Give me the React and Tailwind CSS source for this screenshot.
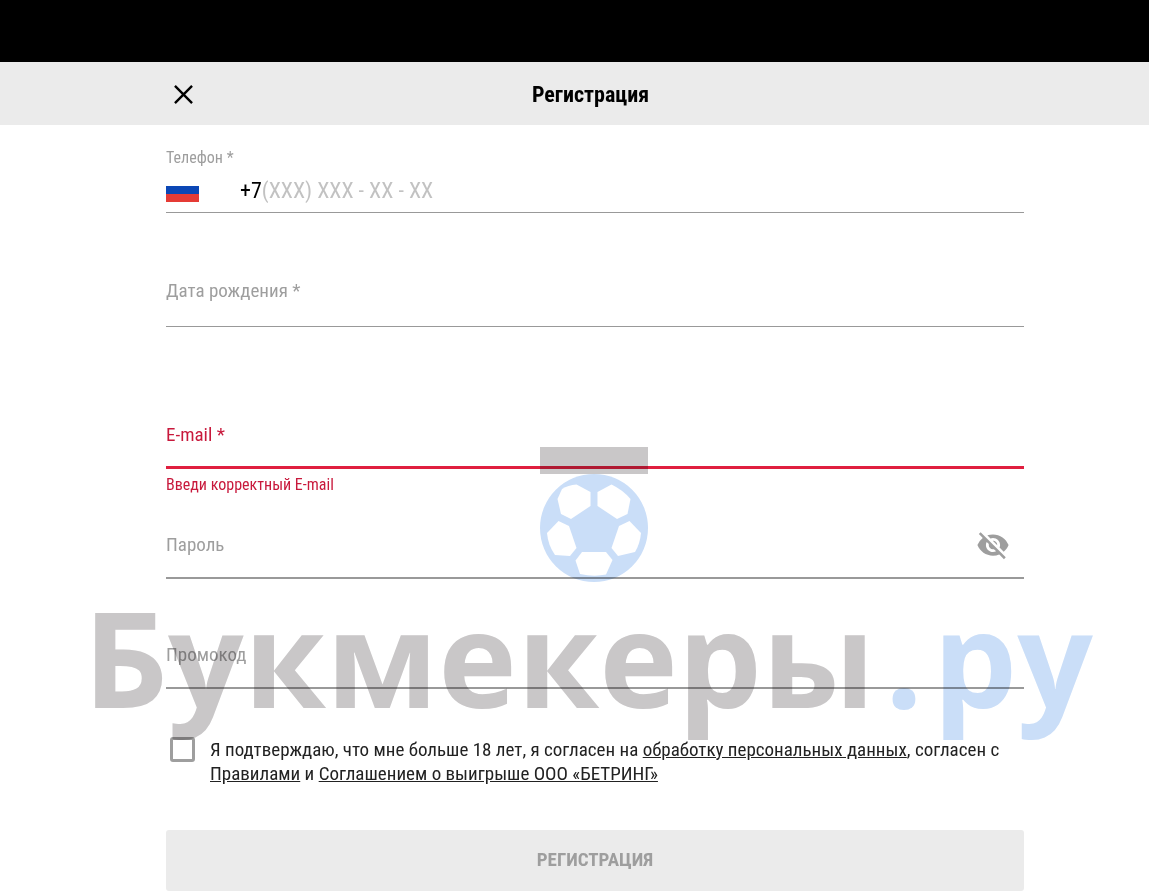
import { useState } from 'react';
import { MdVisibility, MdVisibilityOff } from 'react-icons/md';

function Watermark() {
  return (
    <div className="pointer-events-none absolute inset-x-0 top-[447px] flex flex-col items-center overflow-x-clip pl-[39px] mix-blend-multiply" aria-hidden>
      <svg className="h-[136px] w-[108px]" viewBox="0 0 108 136">
        <rect width="108" height="27" fill="#c9c7c8" />
        <circle cx="54" cy="81" r="54" fill="#cadef8" />
        <g fill="#fff">
          <path d="M17.500 52L22 42Q28 38 36.500 37.500L50.500 45V59L31 72L21 67Z" />
          <path d="M57.500 45L71.500 37.500Q83 43 90.500 52L87.500 67L77 72L57.500 59Z" />
          <path d="M7 86L18.500 74L29 79L36.500 101L30 109L15 108Q8 98 7 86Z" />
          <path d="M71.500 101L79 79L89.500 74L101 86Q100 97 95 105L78 109Z" />
          <path d="M42 105H66L72.500 113L66 127.500Q54 130 40 127L35.500 113.500Z" />
        </g>
      </svg>
      <div className="flex gap-[10px] whitespace-nowrap pr-3 font-['Open_Sans',sans-serif] text-[133px] font-bold leading-[148px]">
        <span className="text-[#c9c7c8]">Букмекеры</span>
        <span className="text-[#cadef8]">.</span>
        <span className="text-[#cadef8]">ру</span>
      </div>
    </div>
  );
}

function Flag() {
  return (
    <svg className="h-6 w-[33px]" viewBox="0 0 33 24">
      <rect width="33" height="8" fill="#fff" />
      <rect y="8" width="33" height="8" fill="#0b47b5" />
      <rect y="16" width="33" height="8" fill="#e53b35" />
    </svg>
  );
}

export default function App() {
  const [phone, setPhone] = useState('');
  const [birthDate, setBirthDate] = useState('');
  const [email, setEmail] = useState('');
  const [password, setPassword] = useState('');
  const [promo, setPromo] = useState('');
  const [showPassword, setShowPassword] = useState(false);
  const [agreed, setAgreed] = useState(false);

  return (
    <div className="relative min-h-screen bg-white font-['Roboto_Condensed',Roboto,sans-serif] text-black">
      <div className="h-[62px] bg-black" />
      <header className="flex h-[63px] items-center bg-[#ebebeb] pl-[166px] pr-[125px] pt-0.5">
        <button type="button" className="flex h-9 w-[35px] items-center justify-center" aria-label="Закрыть">
          <svg className="h-[19px] w-[19px]" viewBox="0 0 20 20" fill="none" stroke="currentColor" strokeWidth="2.500">
            <path d="M1 1L19 19M19 1L1 19" />
          </svg>
        </button>
        <h1 className="flex-1 pr-11 text-center text-[22px] font-bold">Регистрация</h1>
      </header>

      <form onSubmit={(e) => e.preventDefault()} className="pl-[166px] pr-[125px] pt-[21px]">
        <div className="border-b border-[#999] pb-0.5">
          <label htmlFor="phone" className="block text-base leading-6 text-[#9e9e9e]">Телефон *</label>
          <div className="flex h-10 items-center">
            <button type="button" className="w-[74px]" aria-label="Россия"><Flag /></button>
            <span className="text-[22px]">+7</span>
            <input
              id="phone"
              type="tel"
              value={phone}
              onChange={(e) => setPhone(e.target.value)}
              placeholder="(XXX) XXX - XX - XX"
              className="min-w-0 flex-1 text-[22px] outline-none placeholder:text-[#c2c2c2]"
            />
          </div>
        </div>

        <div className="mt-[60px] flex h-[54px] items-start border-b border-[#999] pt-1 text-[19px] leading-7">
          <label htmlFor="birth" className="pr-2 text-[#9e9e9e]">Дата рождения *</label>
          <input id="birth" type="text" value={birthDate} onChange={(e) => setBirthDate(e.target.value)} className="min-w-0 flex-1 outline-none" />
        </div>

        <div className="mt-[90px] flex h-[52px] items-start border-b-3 border-[#e01f3f] pt-1 text-[19px] leading-7">
          <label htmlFor="email" className="pr-2 text-[#c8193c]">E-mail *</label>
          <input id="email" type="email" value={email} onChange={(e) => setEmail(e.target.value)} className="min-w-0 flex-1 outline-none" />
        </div>
        <p className="h-[58px] pt-1 text-base leading-6 text-[#c8193c]" role="alert">Введи корректный E-mail</p>

        <div className="flex h-[52px] items-start border-b-2 border-[#999] pt-1 text-[19px] leading-7">
          <label htmlFor="password" className="pr-2 text-[#9e9e9e]">Пароль</label>
          <input
            id="password"
            type={showPassword ? 'text' : 'password'}
            value={password}
            onChange={(e) => setPassword(e.target.value)}
            className="min-w-0 flex-1 outline-none"
          />
          <button type="button" onClick={() => setShowPassword(!showPassword)} className="mr-[14px] flex h-7 items-center text-[#9e9e9e]" aria-label="Показать пароль">
            {showPassword ? <MdVisibility size={34} /> : <MdVisibilityOff size={34} />}
          </button>
        </div>

        <div className="mt-[58px] flex h-[52px] items-start border-b-2 border-[#999] pt-1 text-[19px] leading-7">
          <label htmlFor="promo" className="pr-2 text-[#9e9e9e]">Промокод</label>
          <input id="promo" type="text" value={promo} onChange={(e) => setPromo(e.target.value)} className="min-w-0 flex-1 outline-none" />
        </div>

        <div className="mt-12 flex items-start pl-1">
          <input
            id="agree"
            type="checkbox"
            checked={agreed}
            onChange={(e) => setAgreed(e.target.checked)}
            className="h-[25px] w-[25px] shrink-0 appearance-none rounded-[3px] border-3 border-[#9e9e9e] bg-white checked:bg-[#9e9e9e]"
          />
          <label htmlFor="agree" className="pl-[15px] pt-px text-[19px] leading-6 text-[#222]">
            Я подтверждаю, что мне больше 18 лет, я согласен на{' '}
            <a href="#personal" className="underline">обработку персональных данных</a>, согласен с{' '}
            <a href="#rules" className="underline">Правилами</a> и{' '}
            <a href="#agreement" className="underline">Соглашением о выигрыше ООО «БЕТРИНГ»</a>
          </label>
        </div>

        <button type="submit" disabled={!agreed} className="mt-11 h-[61px] w-full rounded-[3px] bg-[#ebebeb] text-[19px] font-bold text-[#9e9e9e]">
          РЕГИСТРАЦИЯ
        </button>
      </form>

      <Watermark />
    </div>
  );
}
